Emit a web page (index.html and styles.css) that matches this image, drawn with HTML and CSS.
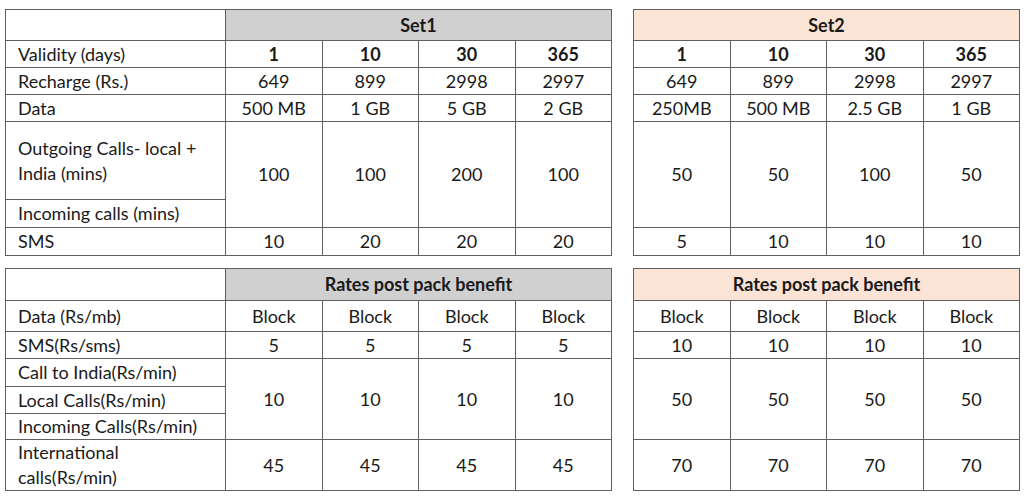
FILE: index.html
```html
<!DOCTYPE html>
<html>
<head>
<meta charset="utf-8">
<link rel="stylesheet" href="styles.css">
</head>
<body>
<div class="page">
  <div class="block top">
    <table class="grid left">
      <colgroup><col class="c-label"><col class="c-val"><col class="c-val"><col class="c-val"><col class="c-val"></colgroup>
      <tr class="r-head"><td class="lbl"></td><td class="head gray" colspan="4">Set1</td></tr>
      <tr class="r-27"><td class="lbl">Validity (days)</td><td class="b">1</td><td class="b">10</td><td class="b">30</td><td class="b">365</td></tr>
      <tr class="r-27"><td class="lbl">Recharge (Rs.)</td><td>649</td><td>899</td><td>2998</td><td>2997</td></tr>
      <tr class="r-27"><td class="lbl">Data</td><td>500 MB</td><td>1 GB</td><td>5 GB</td><td>2 GB</td></tr>
      <tr class="r-78"><td class="lbl">Outgoing Calls- local +<br>India (mins)</td><td rowspan="2">100</td><td rowspan="2">100</td><td rowspan="2">200</td><td rowspan="2">100</td></tr>
      <tr class="r-28"><td class="lbl">Incoming calls (mins)</td></tr>
      <tr class="r-28"><td class="lbl">SMS</td><td>10</td><td>20</td><td>20</td><td>20</td></tr>
    </table>
    <table class="grid right">
      <colgroup><col class="c-val"><col class="c-val"><col class="c-val"><col class="c-val"></colgroup>
      <tr class="r-head"><td class="head peach" colspan="4">Set2</td></tr>
      <tr class="r-27"><td class="b">1</td><td class="b">10</td><td class="b">30</td><td class="b">365</td></tr>
      <tr class="r-27"><td>649</td><td>899</td><td>2998</td><td>2997</td></tr>
      <tr class="r-27"><td>250MB</td><td>500 MB</td><td>2.5 GB</td><td>1 GB</td></tr>
      <tr class="r-106"><td>50</td><td>50</td><td>100</td><td>50</td></tr>
      <tr class="r-28"><td>5</td><td>10</td><td>10</td><td>10</td></tr>
    </table>
  </div>
  <div class="block bottom">
    <table class="grid left">
      <colgroup><col class="c-label"><col class="c-val"><col class="c-val"><col class="c-val"><col class="c-val"></colgroup>
      <tr class="r-head2"><td class="lbl"></td><td class="head gray" colspan="4">Rates post pack benefit</td></tr>
      <tr class="r-31"><td class="lbl">Data (Rs/mb)</td><td>Block</td><td>Block</td><td>Block</td><td>Block</td></tr>
      <tr class="r-27"><td class="lbl">SMS(Rs/sms)</td><td>5</td><td>5</td><td>5</td><td>5</td></tr>
      <tr class="r-28"><td class="lbl">Call to India(Rs/min)</td><td rowspan="3">10</td><td rowspan="3">10</td><td rowspan="3">10</td><td rowspan="3">10</td></tr>
      <tr class="r-27"><td class="lbl">Local Calls(Rs/min)</td></tr>
      <tr class="r-26"><td class="lbl">Incoming Calls(Rs/min)</td></tr>
      <tr class="r-51"><td class="lbl">International<br>calls(Rs/min)</td><td>45</td><td>45</td><td>45</td><td>45</td></tr>
    </table>
    <table class="grid right">
      <colgroup><col class="c-val"><col class="c-val"><col class="c-val"><col class="c-val"></colgroup>
      <tr class="r-head2"><td class="head peach" colspan="4">Rates post pack benefit</td></tr>
      <tr class="r-31"><td>Block</td><td>Block</td><td>Block</td><td>Block</td></tr>
      <tr class="r-27"><td>10</td><td>10</td><td>10</td><td>10</td></tr>
      <tr class="r-81"><td>50</td><td>50</td><td>50</td><td>50</td></tr>
      <tr class="r-51"><td>70</td><td>70</td><td>70</td><td>70</td></tr>
    </table>
  </div>
</div>
</body>
</html>
```
FILE: styles.css
```css
html, body {
  margin: 0;
  padding: 0;
  background: #ffffff;
}
body {
  font-family: Lato, "Open Sans", "Liberation Sans", sans-serif;
  font-size: 18px;
  color: #1a1a1a;
}
.page {
  display: flex;
  flex-direction: column;
  gap: 12px;
  padding: 9px 0 0 5px;
}
.block {
  display: flex;
  gap: 21px;
  align-items: flex-start;
}
.grid {
  border-collapse: collapse;
  table-layout: fixed;
}
.grid.left { width: 607px; }
.grid.right { width: 387px; }
.c-label { width: 220px; }
.c-val { width: 96.5px; }
.grid td {
  border: 1px solid #5f5f5f;
  padding: 0;
  text-align: center;
  vertical-align: middle;
  line-height: 25px;
  white-space: nowrap;
}
.grid td.lbl {
  text-align: left;
  padding-left: 12px;
}
.grid td.b, .grid td.head {
  font-weight: bold;
}
.gray { background: #d0d0d0; }
.peach { background: #fbe3d6; }
.r-head td { height: 30px; }
.r-head2 td { height: 31px; }
.r-26 td { height: 25px; }
.r-27 td { height: 26px; }
.r-28 td { height: 27px; }
.r-31 td { height: 30px; }
.r-51 td { height: 50px; }
.r-78 td { height: 77px; }
.r-81 td { height: 80px; }
.r-106 td { height: 105px; }
```
